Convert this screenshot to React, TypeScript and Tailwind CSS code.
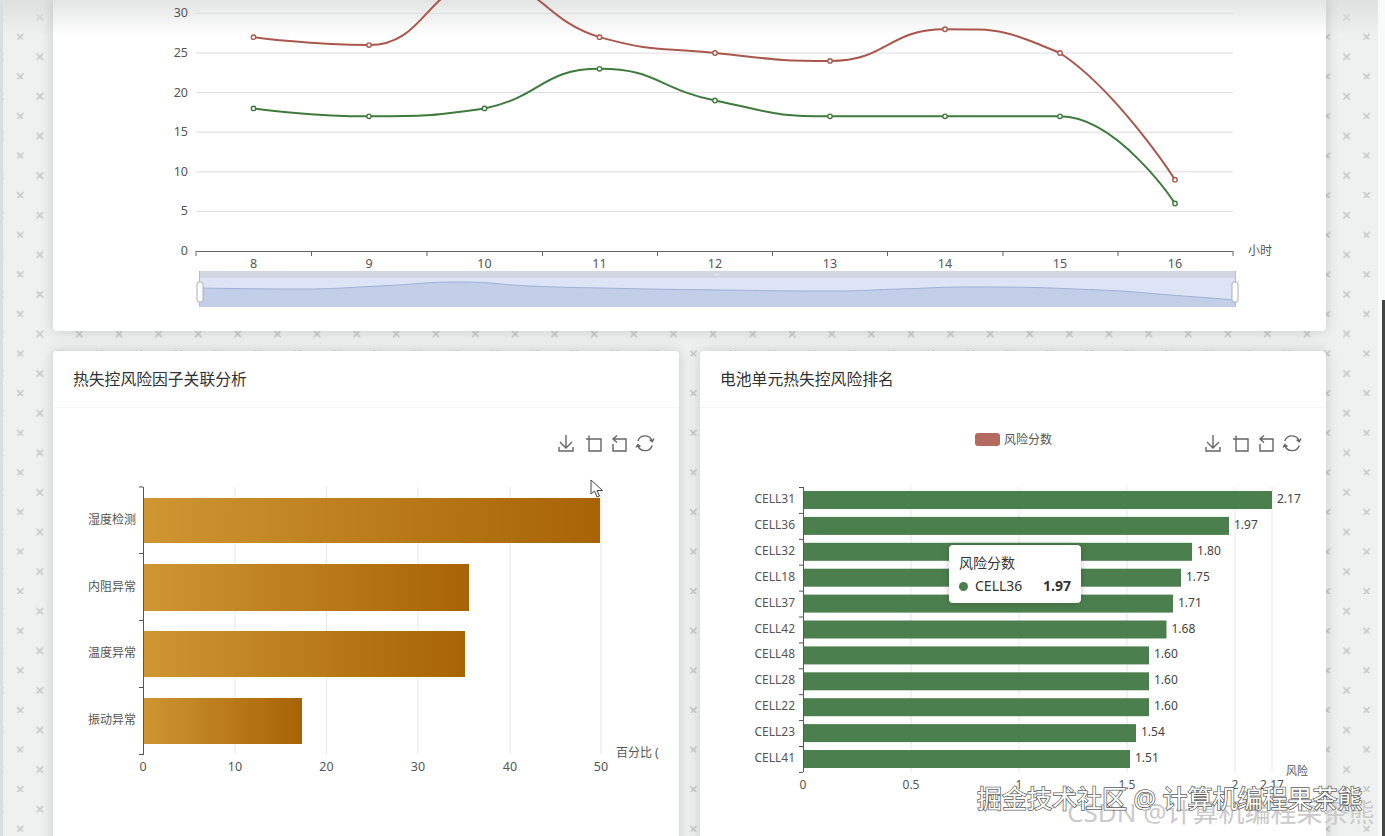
import React from "react";

type Pt = [number, number];

function smooth(pts: Pt[]): string {
  let d = `M${pts[0][0]} ${pts[0][1]}`;
  const slope = (i: number) => {
    if (i === 0 || i === pts.length - 1) return null;
    const d0 = pts[i][1] - pts[i - 1][1];
    const d1 = pts[i + 1][1] - pts[i][1];
    if (d0 * d1 <= 0) return 0;
    return (pts[i + 1][1] - pts[i - 1][1]) / (pts[i + 1][0] - pts[i - 1][0]);
  };
  const clamp = (v: number, a: number, b: number) => Math.min(Math.max(v, Math.min(a, b)), Math.max(a, b));
  for (let i = 0; i < pts.length - 1; i++) {
    const a = pts[i];
    const b = pts[i + 1];
    const dx = (b[0] - a[0]) * 0.5;
    const sa = slope(i);
    const sb = slope(i + 1);
    const c1: Pt = sa === null ? a : [a[0] + dx, clamp(a[1] + sa * dx, a[1], b[1])];
    const c2: Pt = sb === null ? b : [b[0] - dx, clamp(b[1] - sb * dx, a[1], b[1])];
    d += ` C${c1[0]} ${c1[1]} ${c2[0]} ${c2[1]} ${b[0]} ${b[1]}`;
  }
  return d;
}

const xs = [253.5, 369, 484.5, 599.5, 715, 830, 945, 1060, 1175];
const toY = (v: number) => 251 - v * 7.92;
const red = [27, 26, 34, 27, 25, 24, 28, 25, 9];
const green = [18, 17, 18, 23, 19, 17, 17, 17, 6];
const redPts = red.map((v, i) => [xs[i], toY(v)] as Pt);
const greenPts = green.map((v, i) => [xs[i], toY(v)] as Pt);
const ticks = [196, 311.5, 427, 542.5, 657.5, 772.5, 887.5, 1003, 1118, 1233];
const gridVals = [30, 25, 20, 15, 10, 5];

const zoomPts: Pt[] = [
  [199, 288], [300, 289], [380, 286], [460, 282], [530, 286], [600, 288], [720, 290],
  [830, 291], [900, 289], [970, 287], [1100, 290], [1170, 295], [1236, 300],
];

function LineChart() {
  const zoomLine = smooth(zoomPts);
  return (
    <svg viewBox="53 0 1273 331" width="1273" height="331" className="block">
      {gridVals.map((v) => (
        <line key={v} x1="196" x2="1233" y1={toY(v)} y2={toY(v)} stroke="#dcdcdc" strokeWidth="1" />
      ))}
      {[30, 25, 20, 15, 10, 5, 0].map((v) => (
        <text key={v} x="188" y={toY(v) + 4} textAnchor="end" fontSize="12.5" fill="#555">{v}</text>
      ))}
      <line x1="196" x2="1233" y1="251.5" y2="251.5" stroke="#666" strokeWidth="1" />
      {ticks.map((t) => (
        <line key={t} x1={t} x2={t} y1="251" y2="256" stroke="#666" strokeWidth="1" />
      ))}
      {xs.map((x, i) => (
        <text key={x} x={x} y="268" textAnchor="middle" fontSize="12.5" fill="#555">{i + 8}</text>
      ))}
      <text x="1248" y="255" fontSize="12" fill="#555">小时</text>

      <path d={smooth(redPts)} fill="none" stroke="#a9574c" strokeWidth="2" />
      <path d={smooth(greenPts)} fill="none" stroke="#3f7a3d" strokeWidth="2" />
      {redPts.map((p) => (
        <circle key={p[0]} cx={p[0]} cy={p[1]} r="2.2" fill="#fff" stroke="#a9574c" strokeWidth="1.4" />
      ))}
      {greenPts.map((p) => (
        <circle key={p[0]} cx={p[0]} cy={p[1]} r="2.2" fill="#fff" stroke="#3f7a3d" strokeWidth="1.4" />
      ))}

      <rect x="199" y="271" width="1037" height="36" fill="#dde4f5" />
      <rect x="199" y="271" width="1037" height="7" fill="#d2d6e0" />
      <path d={`${zoomLine} L1236 307 L199 307 Z`} fill="#c3cfe9" />
      <path d={zoomLine} fill="none" stroke="#9fb1d8" strokeWidth="1" />
      <line x1="199.5" x2="199.5" y1="271" y2="307" stroke="#b4bdd4" />
      <line x1="1235.5" x2="1235.5" y1="271" y2="307" stroke="#b4bdd4" />
      <rect x="197" y="282" width="6" height="20" rx="2" fill="#fff" stroke="#a9adb8" strokeWidth="1" />
      <rect x="1232" y="282" width="6" height="20" rx="2" fill="#fff" stroke="#a9adb8" strokeWidth="1" />
      <circle cx="715.5" cy="274.5" r="0.7" fill="#fff" />
      <circle cx="718" cy="274.5" r="0.7" fill="#fff" />
    </svg>
  );
}

function Toolbox({ dx = 0 }: { dx?: number }) {
  return (
    <g transform={`translate(${dx} 0)`} fill="none" stroke="#666" strokeWidth="1.4">
      <path d="M566 435 V448 M560 442 L566 448 L572 442 M559 447 V451 H573 V447" />
      <path d="M586 439 H601 V451 H589 V435.5" />
      <path d="M617 435.5 L613 439 L617 442.5 M613 439 H626 V451 H613 V444" />
      <path d="M637.8 441 A7.5 7.5 0 0 1 652.2 441.5 M654 438.5 L652.3 441.7 L649.5 439.7" />
      <path d="M652.2 445.5 A7.5 7.5 0 0 1 637.8 445 M636 447.5 L637.8 444.5 L640.5 446.5" />
    </g>
  );
}

const factorBars = [
  { label: "湿度检测", y: 498, h: 45, x2: 600 },
  { label: "内阻异常", y: 564, h: 47, x2: 469 },
  { label: "温度异常", y: 631, h: 46, x2: 465 },
  { label: "振动异常", y: 698, h: 46, x2: 302 },
];

function FactorChart() {
  return (
    <svg viewBox="53 408 626 428" width="626" height="428" className="block">
      <defs>
        <linearGradient id="gold" x1="0" x2="1" y1="0" y2="0">
          <stop offset="0" stopColor="#cf9632" />
          <stop offset="1" stopColor="#a86305" />
        </linearGradient>
      </defs>
      <Toolbox />
      {[235, 326.5, 418, 510, 601].map((x) => (
        <line key={x} x1={x} x2={x} y1="487" y2="754" stroke="#e6e6e6" />
      ))}
      {factorBars.map((b) => (
        <g key={b.label}>
          <rect x="143" y={b.y} width={b.x2 - 143} height={b.h} fill="url(#gold)" />
          <text x="136" y={b.y + b.h / 2 + 3} textAnchor="end" fontSize="12" fill="#555">{b.label}</text>
        </g>
      ))}
      <line x1="143.5" x2="143.5" y1="487" y2="755" stroke="#555" />
      {[487, 553.5, 620.5, 687.5, 754.5].map((y) => (
        <line key={y} x1="139" x2="143" y1={y} y2={y} stroke="#555" />
      ))}
      {[[143, 0], [235, 10], [326.5, 20], [418, 30], [510, 40], [601, 50]].map(([x, v]) => (
        <text key={v} x={x} y="771" textAnchor="middle" fontSize="12.5" fill="#555">{v}</text>
      ))}
      <text x="616" y="757" fontSize="12" fill="#555">百分比 (</text>
      <path d="M591 480 V494 L594.5 491 L597 497 L599.5 496 L597 490.5 H602.5 Z" fill="#fff" stroke="#444" strokeWidth="1" />
    </svg>
  );
}

const cells: [string, string, number][] = [
  ["CELL31", "2.17", 1272],
  ["CELL36", "1.97", 1229],
  ["CELL32", "1.80", 1192],
  ["CELL18", "1.75", 1181],
  ["CELL37", "1.71", 1173],
  ["CELL42", "1.68", 1166.5],
  ["CELL48", "1.60", 1149],
  ["CELL28", "1.60", 1149],
  ["CELL22", "1.60", 1149],
  ["CELL23", "1.54", 1136],
  ["CELL41", "1.51", 1130],
];

function RankChart() {
  return (
    <svg viewBox="700 408 626 428" width="626" height="428" className="block">
      <Toolbox dx={647} />
      <rect x="975" y="433" width="25" height="13" rx="3" fill="#b56a5f" />
      <text x="1004" y="443.5" fontSize="12" fill="#555">风险分数</text>
      {[911, 1019, 1127, 1235, 1272].map((x) => (
        <line key={x} x1={x} x2={x} y1="487" y2="772" stroke="#e6e6e6" />
      ))}
      {cells.map(([name, val, x2], i) => {
        const y = 491 + i * 25.9;
        return (
          <g key={name}>
            <rect x="803" y={y} width={x2 - 803} height="18" fill="#4c7f4e" />
            <text x="795" y={y + 12} textAnchor="end" fontSize="12" fill="#555">{name}</text>
            <text x={x2 + 5} y={y + 12} fontSize="12" fill="#444">{val}</text>
          </g>
        );
      })}
      <line x1="803.5" x2="803.5" y1="487" y2="772" stroke="#555" />
      {Array.from({ length: 12 }, (_, i) => 487.5 + i * 25.9).map((y) => (
        <line key={y} x1="799" x2="803" y1={y} y2={y} stroke="#555" />
      ))}
      {[[803, "0"], [911, "0.5"], [1019, "1"], [1127, "1.5"], [1235, "2"], [1272, "2.17"]].map(([x, v]) => (
        <text key={String(v)} x={x as number} y="789" textAnchor="middle" fontSize="12" fill="#555">{v}</text>
      ))}
      <text x="1286" y="775" fontSize="11" fill="#555">风险</text>
    </svg>
  );
}

function Card({ title, children }: { title: string; children: React.ReactNode }) {
  return (
    <div className="relative h-[520px] rounded-[4px] bg-white shadow-[0_0_14px_rgba(0,0,0,0.16)]">
      <div className="flex h-[57px] items-center border-b border-[#f4f5f5] pl-5 pt-[2px] text-[15.8px] text-[#303133]">{title}</div>
      {children}
    </div>
  );
}

export default function App() {
  return (
    <div className="relative h-[836px] w-full overflow-hidden bg-[#eff1f0] font-['Noto_Sans','Noto_Sans_CJK_SC',sans-serif]">
      <svg className="absolute inset-0 h-full w-full" aria-hidden="true">
        <defs>
          <pattern id="xmarks" width="39.6" height="39.6" patternUnits="userSpaceOnUse">
            <path d="M-3 14 L3.4 20.4 M3.4 14 L-3 20.4 M36.6 14 L43 20.4 M43 14 L36.6 20.4 M17 33.8 L23.4 40.2 M23.4 33.8 L17 40.2" stroke="#c6c9c9" strokeWidth="1.5" fill="none" />
          </pattern>
        </defs>
        <rect width="100%" height="100%" fill="url(#xmarks)" />
      </svg>
      <div className="pointer-events-none absolute inset-x-0 top-0 h-[36px] bg-gradient-to-b from-[#dfe0e0] to-transparent" />
      <div className="pointer-events-none absolute inset-y-0 left-0 w-[3px] bg-[#dcdfdf]" />

      <div className="relative flex flex-col gap-5 pl-[53px] pr-[59px]">
        <div className="h-[331px] rounded-b-[4px] bg-white bg-gradient-to-b from-[#e3e4e4] to-white to-[36px] shadow-[0_0_14px_rgba(0,0,0,0.16)]">
          <LineChart />
        </div>
        <div className="grid grid-cols-2 gap-[21px]">
          <Card title="热失控风险因子关联分析">
            <FactorChart />
          </Card>
          <Card title="电池单元热失控风险排名">
            <RankChart />
            <div className="absolute left-[249px] top-[194px] h-[58px] w-[132px] rounded-[4px] bg-white px-[10px] pt-[8px] shadow-[0_0_6px_rgba(0,0,0,0.25)]">
              <div className="text-sm leading-5 text-[#333]">风险分数</div>
              <div className="mt-[3px] flex items-center text-sm leading-5 text-[#333]">
                <span className="mr-[7px] h-[9px] w-[9px] rounded-full bg-[#4c7f4e]" />
                <span>CELL36</span>
                <span className="ml-auto font-bold">1.97</span>
              </div>
            </div>
          </Card>
        </div>
      </div>

      <div className="absolute inset-y-0 right-0 w-[7px] bg-[#f9fafa]" />
      <div className="absolute bottom-0 right-0 top-[300px] w-[3px] bg-[#444]" />

      <div className="absolute left-[1067px] top-[794px] whitespace-nowrap text-[26px] leading-9 text-[#cacaca]">CSDN @计算机编程果茶熊</div>
      <div className="absolute left-[977px] top-[780px] whitespace-nowrap text-[25px] leading-9 text-white [-webkit-text-stroke:1.5px_#5c5c5c] [paint-order:stroke_fill]">掘金技术社区 @ 计算机编程果茶熊</div>
    </div>
  );
}
